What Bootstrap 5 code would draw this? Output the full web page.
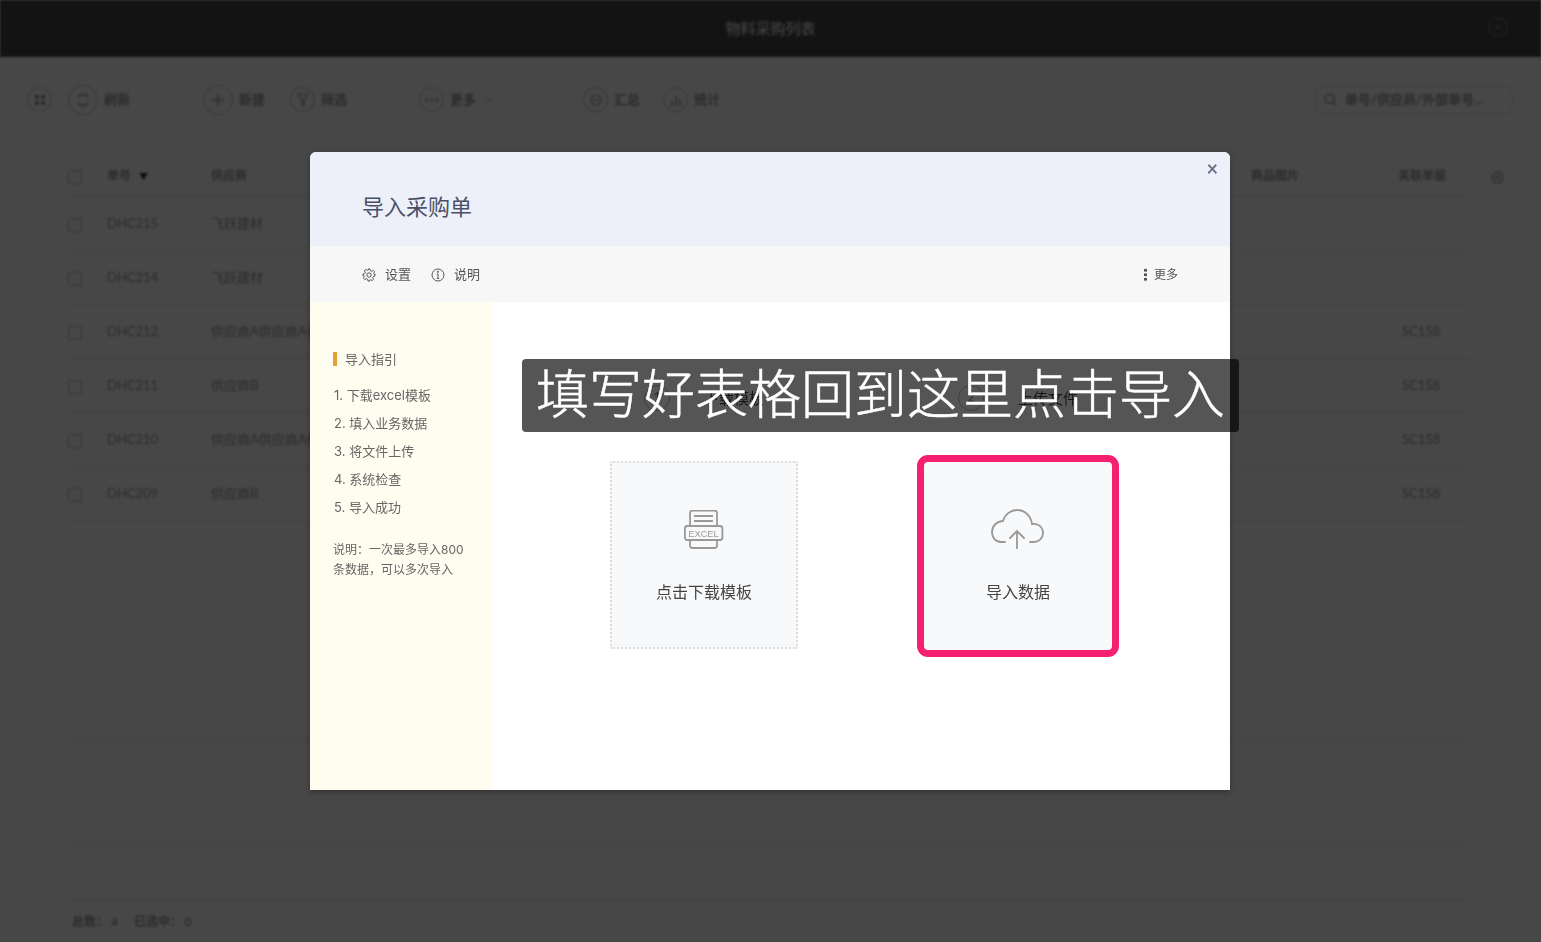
<!DOCTYPE html>
<html lang="zh-CN">
<head>
  <meta charset="UTF-8" />
  <meta name="viewport" content="width=device-width, initial-scale=1.0"/>
  <title>物料采购列表</title>
  <link rel="stylesheet" href="https://cdn.jsdelivr.net/npm/bootstrap@5.3.0/dist/css/bootstrap.min.css"/>
  <style>
    html, body { height: 100%; overflow: hidden; }
    body {
      background: #fff;
      font-family: "Lato", "Noto Sans CJK SC", sans-serif;
      font-size: 13px;
    }

    /* page behind the dialog */
    .list-page { height: 942px; filter: blur(1.3px); color: #999; }
    .top-bar { height: 57px; background: #474747; color: #f0f0f0; font-size: 15px; }
    .top-close { right: 33px; top: 17px; }
    .tool-bar { height: 86px; padding: 0 28px 0 27px; font-size: 13px; font-weight: 700; }
    .tool-ring {
      width: 25px; height: 25px; border: 1px solid #bbb; border-radius: 50%;
      margin-right: 6px; color: #999;
    }
    .tool-ring.big { width: 30px; height: 30px; }
    .gap-a { margin-left: 16px; }
    .gap-b { margin-left: 73px; }
    .gap-c { margin-left: 25px; }
    .gap-d { margin-left: 72px; }
    .gap-e { margin-left: 90px; }
    .gap-f { margin-left: 23px; }
    .search-box {
      width: 198px; height: 30px; border: 1px solid #dcdcdc; border-radius: 10px;
      padding: 0 8px; font-size: 13px; white-space: nowrap; overflow: hidden;
    }
    .order-wrap { margin: 12px 37px 0 68px; }
    .order-table { width: 1436px; table-layout: fixed; margin: 0; --bs-table-color: #999; --bs-table-bg: transparent; }
    .order-table th, .order-table td {
      padding: 0; vertical-align: middle; white-space: nowrap; overflow: hidden;
      border-bottom: 1px solid #e6e6e6; color: #999; font-size: 13px;
    }
    .order-table thead th { height: 42px; padding-top: 2px; font-size: 12px; font-weight: 700; }
    .order-table tbody td { height: 54px; }
    .order-table .no-line { border: 0; }
    .order-table .link-cell { padding-left: 4px; }
    .order-table tr.gap-218 td { height: 218px; }
    .order-table tr.gap-107 td { height: 107px; }
    .col-check { width: 39px; }
    .col-code { width: 104px; }
    .col-supplier { width: 220px; }
    .col-pic { width: 147px; }
    .col-link { width: 74px; }
    .col-set { width: 32px; }
    .row-check { width: 14px; height: 14px; margin-top: 2px; border: 1px solid #bbb; border-radius: 2px; display: block; }
    .sort-mark { color: #333; font-size: 9px; margin-left: 8px; }
    .count-foot { height: 42px; padding: 2px 0 0 72px; font-size: 12px; font-weight: 700; color: #999; }

    .dim-layer { background: rgba(0, 0, 0, .72); }

    /* dialog */
    .import-box {
      left: 310px; top: 152px; width: 920px; height: 638px;
      background: #fff; border-radius: 6px 6px 0 0; overflow: hidden;
      box-shadow: 0 2px 6px rgba(0, 0, 0, .3);
    }
    .import-head { height: 94px; padding: 14px 52px 0; background: #edf0f8; color: #4a5068; font-size: 22px; }
    .import-x { right: 12px; top: 4px; color: #6a7388; font-size: 20px; font-weight: 700; line-height: 24px; }
    .import-tools { height: 56px; padding: 2px 52px 0; background: #f7f7f7; color: #555; }
    .tool-label { margin-left: 9px; }
    .info-mark { margin: 0 9px 0 20px; }
    .more-dots { width: 3px; height: 13px; margin: 0 7px 2px 0; background: radial-gradient(circle, #555 1.5px, transparent 1.6px) 0 0 / 3px 4.5px repeat-y; }
    .more-text { font-size: 12px; }
    .guide-side { width: 182px; padding: 50px 0 0 23px; background: #fffdf0; color: #666; flex: none; font-family: "Inter", "Noto Sans CJK SC", sans-serif; }
    .guide-title { border-left: 4px solid #e5a035; padding-left: 8px; height: 14px; line-height: 14px; margin-bottom: 15px; }
    .guide-steps { margin: 0 0 19px; padding: 0 0 0 1px; list-style: none; }
    .guide-steps li { height: 28px; line-height: 28px; white-space: nowrap; }
    .guide-note { font-size: 12px; line-height: 20px; color: #666; white-space: nowrap; }
    .import-main { padding-top: 82px; }
    .step-row { height: 28px; margin-bottom: 49px; font-size: 15px; color: #444; }
    .step-cell { width: 314px; gap: 34px; }
    .step-num { width: 26px; height: 26px; border: 1px solid #bbb; border-radius: 50%; font-size: 13px; color: #888; }
    .act-row { gap: 126px; }
    .act-card {
      width: 188px; height: 188px; padding-top: 47px; background: #f8f9fb;
      border: 2px dotted #dedede; border-radius: 2px; color: #444; font-size: 16px; line-height: 24px;
    }
    .act-card svg { display: block; margin-bottom: 30px; }
    .act-hot { margin-top: 1px; padding-top: 46px; border-color: #f8f9fb; outline: 7px solid #f5206f; border-radius: 4px; }
    .act-hot svg { margin-top: -5px; margin-bottom: 31px; }

    /* caption on top of everything */
    .big-caption {
      left: 522px; top: 359px; width: 717px; height: 73px; padding-left: 14px;
      background: rgba(0, 0, 0, .667); border-radius: 4px; color: #fff;
      font-family: "Noto Sans CJK SC", sans-serif; font-size: 53px; font-weight: 300;
      -webkit-text-stroke: .5px #fff;
      line-height: 64px; white-space: nowrap;
    }
  </style>
</head>
<body>
  <div class="list-page d-flex flex-column">
    <div class="top-bar position-relative d-flex align-items-center justify-content-center">
      物料采购列表
      <svg class="top-close position-absolute" width="20" height="20" viewBox="0 0 20 20" fill="none" stroke="#888" stroke-width="1">
        <circle cx="10" cy="10" r="9"/><path d="M7.5 7.5l5 5M12.5 7.5l-5 5"/>
      </svg>
    </div>

    <div class="tool-bar d-flex align-items-center">
      <span class="tool-ring d-flex align-items-center justify-content-center m-0">
        <svg width="12" height="12" viewBox="0 0 12 12" fill="#999"><rect x="1" y="1" width="4" height="4"/><rect x="7" y="1" width="4" height="4"/><rect x="1" y="7" width="4" height="4"/><rect x="7" y="7" width="4" height="4"/></svg>
      </span>
      <span class="tool-ring big gap-a d-flex align-items-center justify-content-center">
        <svg width="16" height="16" viewBox="0 0 16 16" fill="none" stroke="#999" stroke-width="1.5"><path d="M13 5A6 6 0 0 0 3 5M3 11a6 6 0 0 0 10 0"/></svg>
      </span>
      <span>刷新</span>
      <span class="tool-ring big gap-b d-flex align-items-center justify-content-center">
        <svg width="14" height="14" viewBox="0 0 14 14" stroke="#999" stroke-width="1.5"><path d="M7 1v12M1 7h12"/></svg>
      </span>
      <span>新建</span>
      <span class="tool-ring gap-c d-flex align-items-center justify-content-center">
        <svg width="12" height="14" viewBox="0 0 12 14" fill="none" stroke="#999" stroke-width="1.2"><path d="M1 1h10L7 7v5L5 13V7z"/></svg>
      </span>
      <span>筛选</span>
      <span class="tool-ring gap-d d-flex align-items-center justify-content-center">
        <svg width="14" height="4" viewBox="0 0 14 4" fill="#999"><circle cx="2" cy="2" r="1.4"/><circle cx="7" cy="2" r="1.4"/><circle cx="12" cy="2" r="1.4"/></svg>
      </span>
      <span>更多</span>
      <svg class="ms-2" width="9" height="6" viewBox="0 0 9 6" fill="none" stroke="#bbb"><path d="M1 1l3.500 3.500L8 1"/></svg>
      <span class="tool-ring gap-e d-flex align-items-center justify-content-center">
        <svg width="12" height="14" viewBox="0 0 12 14" fill="none" stroke="#999" stroke-width="1.2"><circle cx="6" cy="7" r="5"/><path d="M4 7h4"/></svg>
      </span>
      <span>汇总</span>
      <span class="tool-ring gap-f d-flex align-items-center justify-content-center">
        <svg width="12" height="12" viewBox="0 0 12 12" stroke="#999" stroke-width="1.6"><path d="M2 12V7M6 12V2M10 12V5"/></svg>
      </span>
      <span>统计</span>
      <div class="search-box ms-auto d-flex align-items-center gap-2">
        <svg class="flex-shrink-0" width="13" height="13" viewBox="0 0 13 13" fill="none" stroke="#999" stroke-width="1.4"><circle cx="5.500" cy="5.500" r="4.500"/><path d="M9 9l3.500 3.500"/></svg>
        <span>单号/供应商/外部单号...</span>
      </div>
    </div>

    <div class="order-wrap">
      <table class="table order-table">
        <colgroup>
          <col class="col-check"><col class="col-code"><col class="col-supplier"><col>
          <col class="col-pic"><col class="col-link"><col class="col-set">
        </colgroup>
        <thead>
          <tr>
            <th><span class="row-check"></span></th>
            <th>单号<span class="sort-mark">▼</span></th>
            <th>供应商</th><th></th>
            <th>商品图片</th><th>关联单据</th>
            <th class="no-line text-end">
              <svg width="13" height="13" viewBox="0 0 13 13" fill="none" stroke="#aaa" stroke-width="1.500"><circle cx="6.500" cy="6.500" r="5.500"/><circle cx="6.500" cy="6.500" r="2"/></svg>
            </th>
          </tr>
        </thead>
        <tbody>
          <tr><td><span class="row-check"></span></td><td>DHC215</td><td>飞跃建材</td><td></td><td></td><td></td><td class="no-line"></td></tr>
          <tr><td><span class="row-check"></span></td><td>DHC214</td><td>飞跃建材</td><td></td><td></td><td></td><td class="no-line"></td></tr>
          <tr><td><span class="row-check"></span></td><td>DHC212</td><td>供应商A供应商A供应商A</td><td></td><td></td><td class="link-cell">SC158</td><td class="no-line"></td></tr>
          <tr><td><span class="row-check"></span></td><td>DHC211</td><td>供应商B</td><td></td><td></td><td class="link-cell">SC158</td><td class="no-line"></td></tr>
          <tr><td><span class="row-check"></span></td><td>DHC210</td><td>供应商A供应商A供应商A</td><td></td><td></td><td class="link-cell">SC158</td><td class="no-line"></td></tr>
          <tr><td><span class="row-check"></span></td><td>DHC209</td><td>供应商B</td><td></td><td></td><td class="link-cell">SC158</td><td class="no-line"></td></tr>
          <tr class="gap-218"><td colspan="6"></td><td class="no-line"></td></tr>
          <tr class="gap-107"><td colspan="6"></td><td class="no-line"></td></tr>
          <tr><td colspan="6"></td><td class="no-line"></td></tr>
        </tbody>
      </table>
    </div>

    <div class="count-foot mt-auto d-flex align-items-center gap-3">
      <span>总数： 4</span><span>已选中： 0</span>
    </div>
  </div>

  <div class="dim-layer position-fixed top-0 start-0 w-100 h-100"></div>

  <div class="import-box position-absolute d-flex flex-column">
    <div class="import-head d-flex align-items-center flex-shrink-0">导入采购单</div>
    <span class="import-x position-absolute">×</span>

    <div class="import-tools d-flex align-items-center flex-shrink-0">
      <svg width="14" height="14" viewBox="0 0 14 14" fill="none" stroke="#555" stroke-width="1">
        <circle cx="7" cy="7" r="2.200"/>
        <path d="M6 1h2l.4 1.700 1.300.6 1.500-.9 1.400 1.400-.9 1.500.6 1.300L13 6v2l-1.700.4-.6 1.300.9 1.500-1.400 1.400-1.500-.9-1.300.6L7.900 13H6l-.4-1.700-1.300-.6-1.500.9-1.400-1.400.9-1.500-.6-1.300L1 8V6l1.700-.4.6-1.300-.9-1.500 1.400-1.400 1.500.9 1.300-.6z"/>
      </svg>
      <span class="tool-label">设置</span>
      <svg class="info-mark" width="14" height="14" viewBox="0 0 14 14" fill="none" stroke="#555" stroke-width="1">
        <circle cx="7" cy="7" r="6"/><path d="M7 6v4.500M5.800 10.500h2.400M5.800 6H7"/><circle cx="7" cy="3.800" r=".6" fill="#555"/>
      </svg>
      <span>说明</span>
      <span class="more-dots ms-auto"></span>
      <span class="more-text">更多</span>
    </div>

    <div class="d-flex flex-grow-1">
      <div class="guide-side">
        <div class="guide-title">导入指引</div>
        <ol class="guide-steps">
          <li>1. 下载excel模板</li>
          <li>2. 填入业务数据</li>
          <li>3. 将文件上传</li>
          <li>4. 系统检查</li>
          <li>5. 导入成功</li>
        </ol>
        <div class="guide-note">说明：一次最多导入800<br>条数据，可以多次导入</div>
      </div>

      <div class="import-main flex-grow-1">
        <div class="step-row d-flex justify-content-center">
          <div class="step-cell d-flex align-items-center justify-content-center">
            <span class="step-num d-flex align-items-center justify-content-center">1</span>下载模板
          </div>
          <div class="step-cell d-flex align-items-center justify-content-center">
            <span class="step-num d-flex align-items-center justify-content-center">2</span>上传文件
          </div>
        </div>
        <div class="act-row d-flex justify-content-center align-items-start">
          <div class="act-card d-flex flex-column align-items-center">
            <svg width="40" height="40" viewBox="0 0 40 40" fill="none" stroke="#999" stroke-width="1.800">
              <path d="M6 16V3a2.500 2.500 0 0 1 2.500-2.500h22A2.500 2.500 0 0 1 33 3v13"/>
              <path d="M10 6h19M10 11h19"/>
              <rect x=".9" y="16" width="37.500" height="14" rx="2.500"/>
              <path d="M6 30v5.500A2.500 2.500 0 0 0 8.500 38h22a2.500 2.500 0 0 0 2.500-2.500V30"/>
              <text x="19.500" y="26.600" text-anchor="middle" font-family="Liberation Sans, sans-serif" font-size="9.300" fill="#999" stroke="none">EXCEL</text>
            </svg>
            <span>点击下载模板</span>
          </div>
          <div class="act-card act-hot d-flex flex-column align-items-center">
            <svg width="56" height="44" viewBox="0 0 56 44" fill="none" stroke="#999" stroke-width="1.800" stroke-linecap="round">
              <path d="M15 37h-4C5 37 2 32 2 27c0-6 5-11 11-11C15 9 21 5 27 5c8 0 14 6 15 14 6-1 11 3 11 9 0 5-4 9-9 9h-4"/>
              <path d="M27 44V26M20 33l7-7 7 7"/>
            </svg>
            <span>导入数据</span>
          </div>
        </div>
      </div>
    </div>
  </div>

  <div class="big-caption position-absolute">填写好表格回到这里点击导入</div>

  <script src="https://cdn.jsdelivr.net/npm/bootstrap@5.3.0/dist/js/bootstrap.bundle.min.js"></script>
</body>
</html>
